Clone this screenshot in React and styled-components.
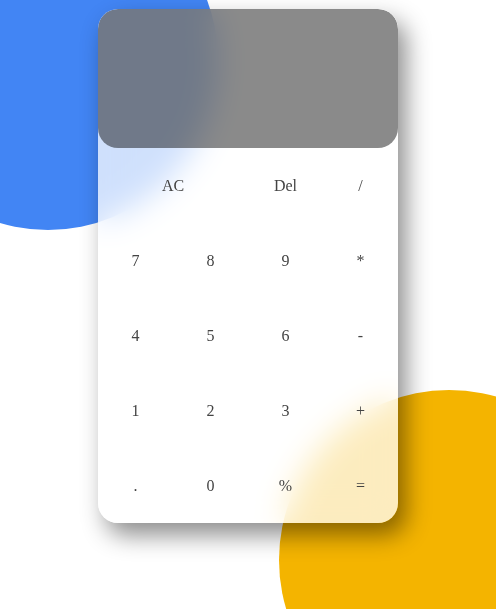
import React from 'react'
import styled, { createGlobalStyle } from 'styled-components'

const GlobalStyle = createGlobalStyle`
  html, body {
    margin: 0;
    padding: 0;
    background: #fff;
    font-family: "Liberation Serif", "Times New Roman", serif;
  }
`

const Page = styled.div`
  position: relative;
  width: 496px;
  height: 609px;
  overflow: hidden;
  display: flex;
  justify-content: center;
  align-items: flex-start;
  padding-top: 9px;
  box-sizing: border-box;
`

const Circle = styled.div`
  position: absolute;
  width: 340px;
  height: 340px;
  border-radius: 50%;
  left: ${p => p.$left}px;
  top: ${p => p.$top}px;
  background: ${p => p.$color};
`

const Calculator = styled.div`
  position: relative;
  width: 300px;
  height: 514px;
  border-radius: 20px;
  background: rgba(255, 255, 255, 0.75);
  backdrop-filter: blur(16px);
  box-shadow: 8px 12px 25px rgba(0, 0, 0, 0.45);
  display: flex;
  flex-direction: column;
  overflow: hidden;
`

const Display = styled.div`
  height: 139px;
  border-radius: 20px;
  background: rgba(0, 0, 0, 0.46);
`

const Keys = styled.div`
  display: grid;
  grid-template-columns: repeat(4, 75px);
  grid-auto-rows: 75px;
`

const Key = styled.button`
  grid-column: span ${p => p.$span || 1};
  border: none;
  background: transparent;
  padding: 0;
  font-family: "Liberation Serif", "Times New Roman", serif;
  font-size: 16px;
  color: #444;
  cursor: pointer;
`

const keys = [
  ['AC', 2], ['Del'], ['/'],
  ['7'], ['8'], ['9'], ['*'],
  ['4'], ['5'], ['6'], ['-'],
  ['1'], ['2'], ['3'], ['+'],
  ['.'], ['0'], ['%'], ['=']
]

export default function App() {
  return (
    <>
      <GlobalStyle />
      <Page>
        <Circle $left={-122} $top={-110} $color="#4285f4" />
        <Circle $left={279} $top={390} $color="#f4b400" />
        <Calculator>
          <Display />
          <Keys>
            {keys.map(([label, span]) => (
              <Key key={label} $span={span}>{label}</Key>
            ))}
          </Keys>
        </Calculator>
      </Page>
    </>
  )
}
